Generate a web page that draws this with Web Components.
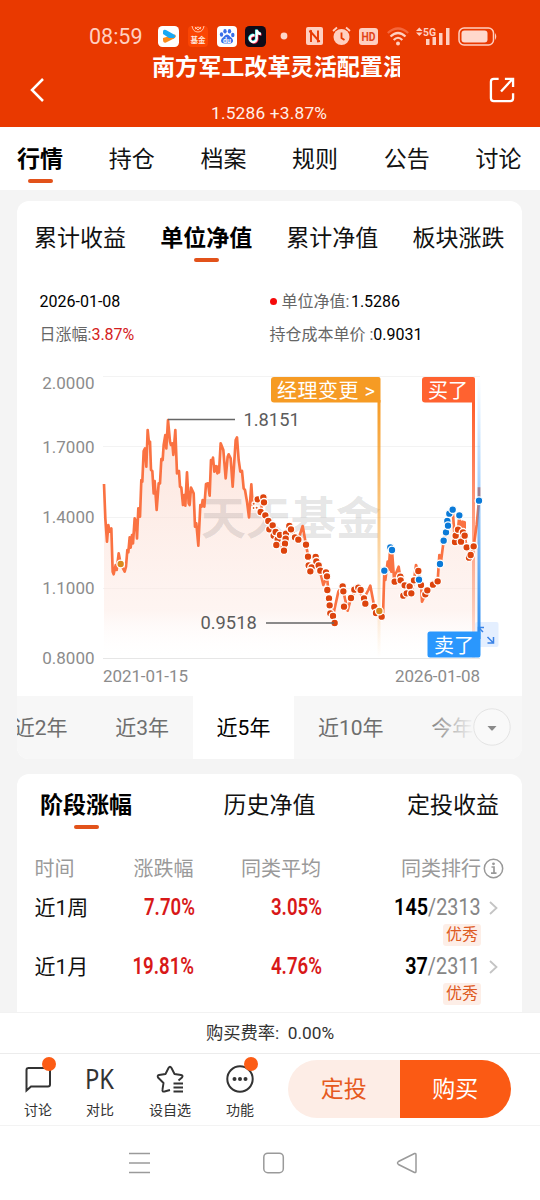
<!DOCTYPE html>
<html lang="zh-CN">
<head>
<meta charset="utf-8">
<title>南方军工改革灵活配置混</title>
<style>
	html, body {
		margin: 0;
		padding: 0;
	}
	body {
		width: 540px;
		height: 1200px;
		overflow: hidden;
		background: #f4f4f4;
		color: #111;
		font-family: Roboto, "Noto Sans CJK SC", sans-serif;
		line-height: 1.2;
	}
</style>
</head>
<body>
<fund-page></fund-page>

<script>
// base: every element clones its own template
class BaseElement extends HTMLElement {
	constructor () {
		super();
		this.attachShadow({mode: "open"});
		const tpl = document.createElement("template");
		tpl.innerHTML = this.constructor.html;
		this.shadowRoot.appendChild(tpl.content.cloneNode(true));
	}
}

/* ---------- phone status bar ---------- */
class StatusBar extends BaseElement {
	static html = `
	<style>
		:host {
			display: flex;
			align-items: center;
			height: 20px;
			padding: 26px 0 0 89px;
			color: #ffcfc0;
			font-size: 21.5px;
			line-height: 20px;
		}
		svg { display: block; flex: none; }
		.time { width: 69px; padding-top: 1px; }
	</style>
	<span class="time">08:59</span>
	<svg width="21" height="21" viewBox="0 0 21 21"><rect width="21" height="21" rx="4.5" fill="#fff"/>
		<path d="M5 12 17 8.500Q19 10.500 16 12.500L8 16.500Q5 17.500 5 14z" fill="#fb8b1a"/>
		<path d="M5 5.500Q5 3 8 4L16 8.500Q18.500 10.500 16 12L11 12 5 8z" fill="#18a8f4"/></svg>
	<svg width="20" height="21" viewBox="0 0 20 21" style="margin-left:9px"><rect width="20" height="21" rx="4" fill="#fb4503"/>
		<path d="M4 0q1 6 6 6t6-6M7 1l3 3 3-3M7 3l3-2 3 2" fill="none" stroke="#ffc7ae" stroke-width="1"/>
		<text x="10" y="16.500" text-anchor="middle" font-size="7.500" font-weight="700" fill="#ffe6dc">基金</text></svg>
	<svg width="20" height="21" viewBox="0 0 20 21" style="margin-left:9px"><rect width="20" height="21" rx="4" fill="#fff"/>
		<g fill="#3b6fe8"><ellipse cx="4.500" cy="8.500" rx="1.700" ry="2.300"/><ellipse cx="8" cy="5.200" rx="1.700" ry="2.300"/><ellipse cx="12.500" cy="5.200" rx="1.700" ry="2.300"/><ellipse cx="15.800" cy="9" rx="1.700" ry="2.300"/>
		<path d="M10 8.500q2 0 3.500 2.500 3 2 2.500 4.500-1 2.500-3.500 2H7.500q-3.500 0-3.500-3 0-2 2.500-3.500 1.500-2.500 3.500-2.500z"/></g>
		<text x="10" y="16.500" text-anchor="middle" font-size="7" font-weight="700" fill="#fff">du</text></svg>
	<svg width="21" height="21" viewBox="0 0 21 21" style="margin-left:8px"><rect width="21" height="21" rx="4.500" fill="#0f0b18"/>
		<g fill="none" stroke-width="2.300"><path d="M9.500 9.500a3.400 3.400 0 1 0 2.200 3.200V4q.5 3.500 4.200 4" stroke="#fe2c55" transform="translate(.7 .6)"/>
		<path d="M9.500 9.500a3.400 3.400 0 1 0 2.200 3.200V4q.5 3.500 4.200 4" stroke="#25f4ee" transform="translate(-.6 -.5)"/>
		<path d="M9.500 9.500a3.400 3.400 0 1 0 2.200 3.200V4q.5 3.500 4.200 4" stroke="#fff"/></g></svg>
	<svg width="8" height="8" style="margin-left:14px"><circle cx="4" cy="4" r="3.400" fill="#ffd6ca"/></svg>
	<svg width="17" height="18" viewBox="0 0 17 18" style="margin-left:18px"><rect width="17" height="18" rx="2" fill="#ffcfc0"/>
		<path d="M5 15V5L12 13V3.500M3 4.500 6 4M14 14 11 14.500" stroke="#e93900" stroke-width="1.900" fill="none"/></svg>
	<svg width="19" height="20" viewBox="0 0 19 20" style="margin-left:9px"><circle cx="9.500" cy="11" r="8" fill="#ffcfc0"/>
		<path d="M1 5 5 1.500M18 5 14 1.500" stroke="#ffcfc0" stroke-width="1.800"/><path d="M9.500 6.500V12L12.500 14" stroke="#e93900" stroke-width="1.800" fill="none"/></svg>
	<svg width="19" height="17" viewBox="0 0 19 17" style="margin-left:8px"><rect width="19" height="17" rx="3" fill="#ffcfc0"/>
		<text x="9.500" y="13" text-anchor="middle" font-size="12.500" font-weight="700" fill="#e2441a" textLength="14" lengthAdjust="spacingAndGlyphs">HD</text></svg>
	<svg width="22" height="19" viewBox="0 0 22 19" style="margin-left:9px" fill="none" stroke-width="2.200">
		<path d="M.8 6Q11-3 21.200 6" stroke="#f4673c"/><path d="M3.500 9.500Q11 2.500 18.500 9.500M6.700 13Q11 8.500 15.300 13" stroke="#ffcfc0"/><circle cx="11" cy="16.500" r="2" fill="#ffcfc0"/></svg>
	<svg width="35" height="20" viewBox="0 0 35 20" style="margin-left:7px" fill="#ffcfc0">
		<path d="M0 5 3.300 1.500 6.600 5zM0 6.500h6.600L3.300 10z"/>
		<text x="7" y="9.500" font-size="11" font-weight="700" textLength="13" lengthAdjust="spacingAndGlyphs">5G</text>
		<path d="M10 13h3.500v6H10zM16.500 11H20v8h-3.500zM23 7h3.500v12H23zM30 2h3.500v17H30z"/></svg>
	<svg width="40" height="19" viewBox="0 0 40 19" style="margin-left:7px"><rect x="1" y="1" width="34.500" height="17" rx="5" fill="none" stroke="#ffcfc0" stroke-width="1.500"/>
		<rect x="3.500" y="3.500" width="26" height="12" rx="3" fill="#ffd8cc"/><path d="M37 6q2.500 3.500 0 7z" fill="#ffcfc0"/></svg>
	`;
}

/* ---------- orange header with the fund name ---------- */
class FundHeader extends BaseElement {
	static html = `
	<style>
		:host {
			display: flex;
			flex-direction: column;
			height: 127px;
			background: #e93900;
			color: #fff;
		}
		.bar {
			display: grid;
			grid-template-columns: 152px 248px 1fr;
			height: 81px;
		}
		.name {
			font-size: 23.1px;
			font-weight: 700;
			line-height: 28px;
			margin-top: 8px;
			white-space: nowrap;
			overflow: hidden;
			height: 28px;
		}
		.mid { display: flex; flex-direction: column; }
		.val {
			margin: 20px 0 0 59px;
			font-size: 17.3px;
			line-height: 22px;
			letter-spacing: .2px;
			white-space: nowrap;
			color: #fff0ea;
		}
		.back { margin: 31px 0 0 29px; }
		.share { margin: 31px 0 0 89px; }
	</style>
	<status-bar></status-bar>
	<div class="bar">
		<svg class="back" width="18" height="26" viewBox="0 0 18 26" fill="none" stroke="#fff" stroke-width="2.500"><path d="M14 2 3 13 14 24"/></svg>
		<div class="mid">
			<span class="name">南方军工改革灵活配置混</span>
			<span class="val">1.5286 +3.87%</span>
		</div>
		<svg class="share" width="26" height="26" viewBox="0 0 27 27" fill="none" stroke="#fff" stroke-width="2.400">
			<path d="M10 2H5Q2 2 2 5v17q0 3 3 3h17q3 0 3-3v-5M12.500 15 24 2.500M16.500 2H25v8.500"/></svg>
	</div>
	`;
}

/* ---------- one tab, bold and underlined when active ---------- */
class FundTab extends BaseElement {
	static html = `
	<style>
		:host {
			display: flex;
			flex-direction: column;
			align-items: center;
			font-size: 23px;
			line-height: 28px;
			color: #111;
			white-space: nowrap;
		}
		i {
			width: 25px;
			height: 4px;
			border-radius: 2px;
			margin-top: 5px;
		}
		:host([active]) { font-weight: 700; color: #000; }
		:host([active]) i { background: #e2521a; }
	</style>
	<span><slot></slot></span><i></i>
	`;
}

class TabRow extends BaseElement {
	static html = `
	<style>
		:host { display: flex; justify-content: space-between; }
	</style>
	<slot></slot>
	`;
}

class FundCard extends BaseElement {
	static html = `
	<style>
		:host {
			display: block;
			width: 505px;
			background: #fff;
			border-radius: 12px;
			overflow: hidden;
		}
	</style>
	<slot></slot>
	`;
}

/* ---------- date and values over the chart ---------- */
class FundInfo extends BaseElement {
	static html = `
	<style>
		:host {
			display: grid;
			grid-template-columns: 230px 1fr;
			row-gap: 11px;
			padding: 0 0 0 22.5px;
			font-size: 16px;
			line-height: 22px;
			color: #666;
			white-space: nowrap;
		}
		b { font-weight: 400; color: #000; }
		.up { color: #d42121; }
		.sep { margin-left: 1.500px; }
		.dot {
			display: inline-block;
			width: 7px;
			height: 7px;
			border-radius: 50%;
			background: #f50a0a;
			margin-right: 5px;
			vertical-align: 2px;
		}
	</style>
	<span><b>2026-01-08</b></span>
	<span><span class="dot"></span>单位净值:<b class="sep">1.5286</b></span>
	<span>日涨幅:<b class="up">3.87%</b></span>
	<span>持仓成本单价 :<b>0.9031</b></span>
	`;
}

/* ---------- net value chart, points are in thirds of a pixel ---------- */
const linea = [
	[42,357],[46,460],[51,530],[55,480],[59,500],[64,490],[68,620],[71,628],[77,600],[80,615],[86,565],[92,597],
	[104,620],[108,605],[112,555],[115,562],[119,517],[122,548],[126,510],[129,535],[134,460],[138,470],[141,520],
	[145,430],[150,455],[154,345],[157,350],[161,258],[165,250],[169,305],[173,195],[177,235],[180,230],[183,315],
	[187,318],[191,385],[194,348],[200,435],[206,355],[210,355],[214,282],[218,285],[221,240],[226,210],[229,250],
	[234,165],[240,230],[243,240],[247,235],[250,270],[256,195],[261,325],[267,318],[270,365],[274,368],[279,420],
	[283,390],[286,422],[291,322],[296,415],[299,420],[303,368],[311,385],[315,485],[319,475],[325,542],[331,420],
	[335,425],[338,405],[343,425],[348,357],[354,355],[359,392],[363,285],[366,295],[369,278],[373,320],[378,303],
	[382,325],[384,305],[387,322],[392,235],[400,255],[407,340],[413,275],[416,268],[422,280],[428,365],[437,225],
	[441,217],[446,285],[451,320],[456,318],[461,370],[465,375],[471,410],[477,457],[484,358],[488,420],[503,403],
	[520,397],[512,441],[526,451],[535,468],[548,481],[557,501],[563,523],[582,557],[588,506],[602,483],[615,517],
	[625,524],[638,483],[648,539],[652,560],[654,575],[661,619],[677,576],[686,601],[700,660],[711,634],[717,700],
	[729,753],[745,680],[758,664],[760,679],[773,737],[783,699],[800,670],[822,700],[835,675],[841,662],[853,726],
	[866,750],[879,755],[883,617],[886,645],[893,590],[896,615],[901,545],[904,620],[906,555],[912,640],[926,605],
	[932,646],[944,661],[950,685],[959,664],[964,685],[972,646],[978,600],[985,618],[993,660],[996,710],[1006,688],
	[1012,676],[1029,659],[1043,649],[1048,570],[1052,597],[1061,527],[1068,502],[1074,482],[1078,445],[1088,434],
	[1095,531],[1104,494],[1108,451],[1113,530],[1117,470],[1124,472],[1124,512],[1130,547],[1142,570],[1151,544],
	[1160,480],[1167,407],[1167,367]
];
// r = buy, a = sell, d = manager change, m = mini dot
const puntos = {
	m: [[491,416],[491,429],[500,428]],
	r: [
		[503,403],[520,397],[522,412],[512,441],[526,451],[535,468],[538,493],[548,481],[551,512],[557,501],
		[563,523],[559,540],[570,510],[588,506],[587,521],[585,536],[582,557],[598,483],[603,493],[615,517],[625,524],
		[648,539],[654,575],[656,601],[665,607],[661,619],[677,576],[679,589],[686,601],[691,617],[708,622],[711,634],
		[712,675],[717,700],[719,721],[721,745],[729,753],[734,774],[758,664],[760,679],[762,725],[783,699],[793,674],
		[805,668],[812,675],[822,700],[826,716],[853,726],[858,744],[875,755],[914,650],[931,635],[932,646],[944,661],
		[940,692],[950,685],[959,664],[964,685],[972,646],[985,618],[993,660],[1006,688],[1012,676],[1029,659],[1043,649],
		[1095,531],[1097,512],[1104,494],[1113,530],[1119,502],[1124,512],[1130,547],[1137,578],[1142,570],[1151,544]
	],
	a: [
		[883,617],[901,547],[906,555],[987,644],[1050,597],[1061,527],[1068,502],[1072,468],[1074,482],[1078,446],
		[1088,434],[1108,451],[1167,407]
	],
	d: [[92,597],[868,738]]
};

class FundChart extends BaseElement {
	static html = `
	<style>
		:host { display: block; height: 325px; }
		svg { display: block; }
		text { font-family: Roboto, "Noto Sans CJK SC", sans-serif; }
		.eje { font-size: 17px; fill: #8c8c8c; }
		.nota { font-size: 18.3px; fill: #5c5c5c; }
		.flag { font-size: 20px; fill: #fff; }
	</style>
	<svg width="505" height="325" viewBox="17 365 505 325">
		<defs>
			<linearGradient id="area" x1="0" y1="0" x2="0" y2="1"><stop offset="0" stop-color="#fbd5c8" stop-opacity=".62"/><stop offset=".8" stop-color="#fdeae4" stop-opacity=".5"/><stop offset="1" stop-color="#fff" stop-opacity="0"/></linearGradient>
			<linearGradient id="oro" x1="0" y1="0" x2="0" y2="1"><stop stop-color="#f69b24"/><stop offset="1" stop-color="#f69b24" stop-opacity="0"/></linearGradient>
			<linearGradient id="rojo" x1="0" y1="0" x2="0" y2="1"><stop stop-color="#ff5c28"/><stop offset="1" stop-color="#ff5c28" stop-opacity=".12"/></linearGradient>
			<linearGradient id="azul" x1="0" y1="0" x2="0" y2="1"><stop stop-color="#2a97fd" stop-opacity="0"/><stop offset="1" stop-color="#2a8bf0"/></linearGradient>
		</defs>
		<path d="M103 376.500H480M103 446.500H480M103 517.500H480M103 588.500H480" stroke="#f3f3f3" fill="none"/>
		<path d="M103 658.500H480" stroke="#e6e6e6"/>
		<g class="eje">
			<text x="94.500" y="389" text-anchor="end">2.0000</text>
			<text x="94.500" y="452.500" text-anchor="end">1.7000</text>
			<text x="94.500" y="523" text-anchor="end">1.4000</text>
			<text x="94.500" y="593.500" text-anchor="end">1.1000</text>
			<text x="94.500" y="664" text-anchor="end">0.8000</text>
			<text x="103" y="682" textLength="85">2021-01-15</text>
			<text x="395" y="682" textLength="85">2026-01-08</text>
		</g>
		<g id="bajo" transform="translate(90 365) scale(.33333)"></g>
		<text x="201" y="535" font-size="45" font-weight="700" fill="#000" fill-opacity=".11" textLength="180">天天基金</text>
		<g id="curva" transform="translate(90 365) scale(.33333)"></g>
		<rect x="475" y="622" width="23.500" height="25" rx="2" fill="#dfecff" fill-opacity=".85"/>
		<path d="M484 627.500H478.500V633M478.500 627.500 483 632M487.500 637 493.500 643M493.500 637V643H487.500" stroke="#3a82e6" stroke-width="1.500" fill="none"/>
		<rect x="377.500" y="400" width="3" height="258" fill="url(#oro)"/>
		<rect x="472" y="400" width="3" height="258" fill="url(#rojo)"/>
		<rect x="477.500" y="377" width="3" height="262" fill="url(#azul)"/>
		<g id="dots" transform="translate(90 365) scale(.33333)"></g>
		<path d="M168 419.500H235M266 623H334" stroke="#666" stroke-width="1.600"/>
		<text class="nota" x="243.500" y="426">1.8151</text>
		<text class="nota" x="200.500" y="629">0.9518</text>
		<path d="M274 377H378.500Q380.500 377 380.500 379V402.500H274Q271 402.500 271 399.500V380Q271 377 274 377z" fill="#f69b24"/>
		<text class="flag" x="277" y="398" textLength="98">经理变更 &gt;</text>
		<path d="M425 377H473Q475 377 475 379V402.500H425Q422 402.500 422 399.500V380Q422 377 425 377z" fill="#ff6230"/>
		<text class="flag" x="428" y="398">买了</text>
		<path d="M430 631.500H480.500V655Q480.500 657.500 478.500 657.500H430Q427.500 657.500 427.500 655V634Q427.500 631.500 430 631.500z" fill="#2a97fd"/>
		<text class="flag" x="434" y="653">卖了</text>
	</svg>
	`;

	connectedCallback() {
		const _d = "M" + linea.map(p => p.join(" ")).join("L");
		const _clr = {m: "#dc5a26", r: "#dd440d", a: "#0a7ad8", d: "#d98a1c"};
		this.shadowRoot.querySelector("#bajo").innerHTML = `<path d="${_d}V880H42z" fill="url(#area)"/>`;
		this.shadowRoot.querySelector("#curva").innerHTML =
			`<path d="${_d}" fill="none" stroke="#fa7242" stroke-width="8" stroke-linejoin="round"/>`;
		this.shadowRoot.querySelector("#dots").innerHTML = ["m", "r", "a", "d"].map(
			k => puntos[k].map(([x, y]) => {
				const _r = k === "m" ? 5 : 11.5;
				return `<circle cx="${x}" cy="${y}" r="${_r}" fill="${_clr[k]}" stroke="#fff" stroke-width="4"/>`;
			}).join("")
		).join("");
	}
}

/* ---------- period selector under the chart ---------- */
class RangeBar extends BaseElement {
	static html = `
	<style>
		:host {
			display: flex;
			position: relative;
			height: 63.500px;
			margin-top: 6px;
			background: #f7f7f7;
			overflow: hidden;
			font-size: 21px;
			line-height: 65px;
			color: #6e6e6e;
			white-space: nowrap;
		}
		span { flex: none; padding: 0 23.8px; }
		span:first-of-type { margin-left: -27px; }
		.act { background: #fff; color: #000; }
		.mas {
			position: absolute;
			right: 0;
			top: 0;
			width: 100px;
			height: 63.500px;
			background: linear-gradient(90deg, #f7f7f700, #f7f7f7 53%);
		}
		.mas svg { position: absolute; left: 51px; top: 12.500px; }
	</style>
	<span>近2年</span><span>近3年</span><span class="act">近5年</span><span>近10年</span><span>今年</span>
	<div class="mas"><svg width="38" height="38" viewBox="0 0 38 38"><circle cx="19" cy="19" r="18.200" fill="#f9f9f9" stroke="#e4e4e4"/><path d="M14.500 18h9l-4 4.500h-1z" fill="#8a8a8a"/></svg></div>
	`;
}

/* ---------- performance table row ---------- */
class RankRow extends BaseElement {
	static html = `
	<style>
		:host {
			display: grid;
			grid-template-columns: 90px 70px 127px 159px 1fr;
			height: 59px;
			align-content: start;
			line-height: 28px;
			font-size: 21px;
			white-space: nowrap;
		}
		.n {
			display: flex;
			justify-content: flex-end;
			font-size: 23px;
		}
		.n > span {
			display: block;
			transform: scaleX(.86);
			transform-origin: right;
		}
		.up > span { transform: scaleX(.81); }
		.up { color: #d81818; font-weight: 600; }
		.pos { color: #000; font-weight: 600; }
		.tot { color: #868686; }
		em {
			grid-column: 4;
			justify-self: end;
			font-style: normal;
			font-size: 16px;
			line-height: 21.500px;
			height: 21.500px;
			padding: 0 2.500px;
			margin-top: 2px;
			background: #fdeee7;
			color: #dd5a22;
			border-radius: 3px;
		}
		svg { margin: 6px 0 0 7px; }
	</style>
	<span><slot></slot></span>
	<span class="n up"><span id="pct"></span></span>
	<span class="n up"><span id="avg"></span></span>
	<span class="n"><span><span class="pos"></span><span class="tot"></span></span></span>
	<svg width="11" height="16" viewBox="0 0 11 16" fill="none" stroke="#c4c4c4" stroke-width="1.800"><path d="M2 2 8.500 8 2 14"/></svg>
	<em></em>
	`;

	connectedCallback() {
		["pct", "avg"].forEach(
			x => (this.shadowRoot.querySelector("#" + x).textContent = this.getAttribute(x))
		);
		this.shadowRoot.querySelector(".pos").textContent = this.getAttribute("pos");
		this.shadowRoot.querySelector(".tot").textContent = "/" + this.getAttribute("total");
		this.shadowRoot.querySelector("em").textContent = this.getAttribute("nivel");
	}
}

class RankTable extends BaseElement {
	static html = `
	<style>
		:host { display: block; padding: 0 0 0 17.500px; }
		.cab {
			display: grid;
			grid-template-columns: 90px 69px 127.500px 160px 1fr;
			font-size: 20px;
			line-height: 26px;
			color: #9a9a9a;
			margin-bottom: 12px;
			white-space: nowrap;
		}
		.cab span + span { text-align: right; }
		.cab svg { margin: 2px 0 0 2px; }
	</style>
	<div class="cab">
		<span>时间</span><span>涨跌幅</span><span>同类平均</span><span>同类排行</span>
		<svg width="21" height="21" viewBox="0 0 21 21"><circle cx="10.500" cy="10.500" r="9.200" fill="none" stroke="#999" stroke-width="1.500"/><path d="M8.500 9H11V15M8 15.200H13.500" stroke="#999" stroke-width="1.700" fill="none"/><circle cx="10.500" cy="5.800" r="1.400" fill="#999"/></svg>
	</div>
	<rank-row pct="7.70%" avg="3.05%" pos="145" total="2313" nivel="优秀">近1周</rank-row>
	<rank-row pct="19.81%" avg="4.76%" pos="37" total="2311" nivel="优秀">近1月</rank-row>
	`;
}

/* ---------- fixed bottom area ---------- */
class ToolItem extends BaseElement {
	static html = `
	<style>
		:host {
			display: flex;
			flex-direction: column;
			align-items: center;
			position: relative;
			width: 70px;
			font-size: 14px;
			line-height: 18px;
			color: #333;
		}
		.ico {
			display: flex;
			align-items: center;
			justify-content: center;
			height: 38px;
			margin: 6px 0 3px;
		}
		.dot { display: none; }
		:host([dot]) .dot {
			display: block;
			position: absolute;
			left: calc(50% + 3.500px);
			top: 3px;
			width: 14px;
			height: 14px;
			border-radius: 50%;
			background: #fc5c15;
		}
	</style>
	<div class="ico"><slot name="ico"></slot></div>
	<span><slot></slot></span>
	<i class="dot"></i>
	`;
}

class FundFooter extends BaseElement {
	static html = `
	<style>
		:host {
			display: block;
			background: #fff;
			border-top: 1px solid #f2f2f2;
		}
		.fee {
			height: 40px;
			line-height: 40px;
			font-size: 17.300px;
			text-align: center;
			color: #333;
			border-bottom: 1px solid #ececec;
			white-space: pre;
		}
		.tools {
			display: flex;
			height: 71px;
			padding-left: 3px;
			border-bottom: 1px solid #f3f3f3;
		}
		tool-item:nth-child(1) { width: 70px; }
		tool-item:nth-child(2) { width: 54px; }
		tool-item:nth-child(3) { width: 86px; }
		tool-item:nth-child(4) { width: 54px; }
		.pk { font: 27px/38px "Noto Sans", sans-serif; display: block; height: 38px; transform: scaleX(.88); }
		.btns {
			display: flex;
			width: 223px;
			height: 57.500px;
			margin: 6px 0 0 21px;
			border-radius: 29px;
			overflow: hidden;
			font-size: 23px;
			line-height: 60px;
			text-align: center;
		}
		.btns span { flex: 1; background: #fdede6; color: #e65a1e; }
		.btns span + span { background: #fb5a14; color: #fff; }
		.sys { display: flex; height: 74px; padding: 25px 0 0 128px; box-sizing: border-box; }
	</style>
	<div class="fee">购买费率:  0.00%</div>
	<div class="tools">
		<tool-item dot>讨论
			<svg slot="ico" width="28" height="28" viewBox="0 0 28 28" fill="none" stroke="#333" stroke-width="2"><path d="M4 3H24Q26 3 26 5V19.500Q26 21.500 24 21.500H7L2.500 25.500V5Q2.500 3 4.500 3z"/></svg>
		</tool-item>
		<tool-item>对比<span slot="ico" class="pk">PK</span></tool-item>
		<tool-item>设自选
			<svg slot="ico" width="28" height="28" viewBox="0 0 28 28" fill="none" stroke="#333" stroke-width="1.900" stroke-linejoin="round"><path d="M14 25 8.500 26.500Q6 27 6.500 24.500L7.500 18 2 12.500Q1 10.500 3 10L9.500 9 12.500 3Q14 .500 15.500 3L18.500 9 25 10Q27.500 10.500 26 12.500L22.500 15.500M17.500 18.500H27M17.500 22.500H27M17.500 26.500H27"/></svg>
		</tool-item>
		<tool-item dot>功能
			<svg slot="ico" width="28" height="28" viewBox="0 0 28 28"><circle cx="14" cy="14" r="12.700" fill="none" stroke="#333" stroke-width="2"/><g fill="#333"><circle cx="8.500" cy="14" r="2"/><circle cx="14" cy="14" r="2"/><circle cx="19.500" cy="14" r="2"/></g></svg>
		</tool-item>
		<div class="btns"><span>定投</span><span>购买</span></div>
	</div>
	<div class="sys">
		<svg width="290" height="24" viewBox="0 0 290 24" fill="none" stroke="#9a9a9a" stroke-width="1.500"><path d="M1 2.500H22M1 12H22M1 21.500H22"/><rect x="135.800" y="2.200" width="19.500" height="19.500" rx="4"/><path d="M286.500 2.500Q288 2 288 4V20Q288 22 286.500 21.500L270.500 13.500Q268.500 12 270.500 10.500z"/></svg>
	</div>
	`;
}

class FundPage extends BaseElement {
	static html = `
	<style>
		:host {
			display: flex;
			flex-direction: column;
			height: 1200px;
		}
		.tabs { background: #fff; height: 44px; padding: 19px 18.500px 0 17px; flex: none; }
		main { flex: 1; min-height: 0; padding: 11px 0 0 17px; overflow: hidden; }
		.t1 { padding: 24px 17.500px 29px 17px; }
		.t2 { padding: 18.500px 23px 27px 23px; }
		fund-card + fund-card { margin-top: 14.500px; padding-bottom: 30px; }
		fund-info { margin-bottom: 18.500px; }
	</style>
	<fund-header></fund-header>
	<tab-row class="tabs">
		<fund-tab active>行情</fund-tab><fund-tab>持仓</fund-tab><fund-tab>档案</fund-tab>
		<fund-tab>规则</fund-tab><fund-tab>公告</fund-tab><fund-tab>讨论</fund-tab>
	</tab-row>
	<main>
		<fund-card>
			<tab-row class="t1">
				<fund-tab>累计收益</fund-tab><fund-tab active>单位净值</fund-tab>
				<fund-tab>累计净值</fund-tab><fund-tab>板块涨跌</fund-tab>
			</tab-row>
			<fund-info></fund-info>
			<fund-chart></fund-chart>
			<range-bar></range-bar>
		</fund-card>
		<fund-card>
			<tab-row class="t2">
				<fund-tab active>阶段涨幅</fund-tab><fund-tab>历史净值</fund-tab><fund-tab>定投收益</fund-tab>
			</tab-row>
			<rank-table></rank-table>
		</fund-card>
	</main>
	<fund-footer></fund-footer>
	`;
}

window.customElements.define("status-bar", StatusBar);
window.customElements.define("fund-header", FundHeader);
window.customElements.define("fund-tab", FundTab);
window.customElements.define("tab-row", TabRow);
window.customElements.define("fund-card", FundCard);
window.customElements.define("fund-info", FundInfo);
window.customElements.define("fund-chart", FundChart);
window.customElements.define("range-bar", RangeBar);
window.customElements.define("rank-row", RankRow);
window.customElements.define("rank-table", RankTable);
window.customElements.define("tool-item", ToolItem);
window.customElements.define("fund-footer", FundFooter);
window.customElements.define("fund-page", FundPage);
</script>
</body>
</html>
